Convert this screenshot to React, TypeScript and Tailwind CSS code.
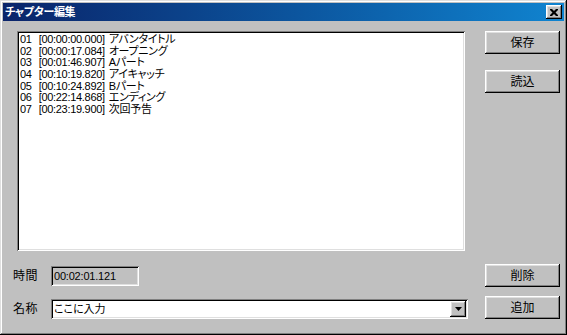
import React from 'react';

const chapters = [
  { no: '01', time: '00:00:00.000', title: 'アバンタイトル' },
  { no: '02', time: '00:00:17.084', title: 'オープニング' },
  { no: '03', time: '00:01:46.907', title: 'Aパート' },
  { no: '04', time: '00:10:19.820', title: 'アイキャッチ' },
  { no: '05', time: '00:10:24.892', title: 'Bパート' },
  { no: '06', time: '00:22:14.868', title: 'エンディング' },
  { no: '07', time: '00:23:19.900', title: '次回予告' },
];

const raised =
  'shadow-[inset_-1px_-1px_#000,inset_1px_1px_#fff,inset_-2px_-2px_#808080,inset_2px_2px_#dfdfdf]';
const sunken =
  'shadow-[inset_1px_1px_#808080,inset_-1px_-1px_#fff,inset_2px_2px_#000,inset_-2px_-2px_#dfdfdf]';

function Button(props: { label: string; className?: string }) {
  return (
    <button
      className={`w-[75px] h-[23px] bg-[#c0c0c0] text-[12px] text-black flex items-center justify-center ${raised} ${props.className ?? ''}`}
    >
      {props.label}
    </button>
  );
}

export default function App() {
  return (
    <div
      className={`w-[567px] h-[335px] bg-[#c0c0c0] p-[3px] flex flex-col text-black [font-family:'Liberation_Sans','Noto_Sans_CJK_JP',sans-serif] [font-feature-settings:'palt'] ${'shadow-[inset_-1px_-1px_#000,inset_1px_1px_#dfdfdf,inset_-2px_-2px_#808080,inset_2px_2px_#fff]'}`}
    >
      {/* title bar */}
      <div className="h-[18px] flex items-center justify-between bg-gradient-to-r from-[#0a246a] to-[#1084d0] pl-[2px] pr-[2px]">
        <span className="text-white font-bold text-[11px] tracking-[-0.3px] leading-none">チャプター編集</span>
        <button className={`w-[16px] h-[14px] bg-[#c0c0c0] flex items-center justify-center ${raised}`}>
          <svg width="8" height="7" viewBox="0 0 8 7">
            <path d="M0 0h2l2 2 2-2h2v1L5.5 3.5 8 6v1H6L4 5 2 7H0V6l2.5-2.5L0 1z" fill="#000" />
          </svg>
        </button>
      </div>

      <div className="flex-1 flex pl-[10px] pb-[13px]">
        {/* left column */}
        <div className="w-[458px] flex flex-col">
          <div className={`ml-[4px] mt-[10px] w-[448px] h-[220px] bg-white pl-[3px] pt-[3px] ${sunken}`}>
            {chapters.map((c) => (
              <div key={c.no} className="flex text-[11px] tracking-[-0.3px] leading-[11.67px] whitespace-nowrap">
                <span>{c.no}</span>
                <span className="ml-[7px]">[{c.time}]</span>
                <span className="ml-[4px]">{c.title}</span>
              </div>
            ))}
          </div>

          <div className="mt-[15px] flex items-center h-[20px]">
            <span className="w-[38px] text-[12px] tracking-[0.5px]">時間</span>
            <div className={`w-[88px] h-[20px] bg-[#c0c0c0] flex items-center pl-[3px] text-[11px] tracking-[-0.2px] ${sunken}`}>
              00:02:01.121
            </div>
          </div>

          <div className="mt-[13px] flex items-center h-[20px]">
            <span className="w-[38px] text-[12px] tracking-[0.5px]">名称</span>
            <div className={`w-[417px] h-[20px] bg-white flex items-center justify-between pl-[3px] pr-[2px] text-[11px] ${sunken}`}>
              <span>ここに入力</span>
              <div className={`w-[16px] h-[16px] bg-[#c0c0c0] flex items-center justify-center ${raised}`}>
                <svg width="7" height="4" viewBox="0 0 7 4">
                  <path d="M0 0h7L3.5 4z" fill="#000" />
                </svg>
              </div>
            </div>
          </div>
        </div>

        {/* right column */}
        <div className="ml-[14px] flex flex-col">
          <Button label="保存" className="mt-[10px]" />
          <Button label="読込" className="mt-[16px]" />
          <Button label="削除" className="mt-auto" />
          <Button label="追加" className="mt-[9px]" />
        </div>
      </div>
    </div>
  );
}
